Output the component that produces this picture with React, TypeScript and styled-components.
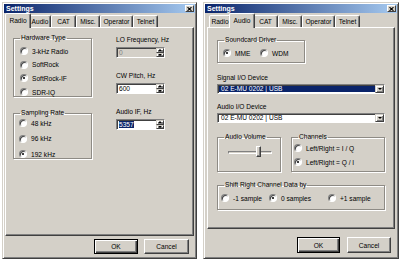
import React from "react";
import styled, { createGlobalStyle, css } from "styled-components";

const FACE = "#d4d0c8";
const SHADOW = "#808080";
const DARK = "#404040";
const NAVY = "#0a246a";

const GlobalStyle = createGlobalStyle`
  * { box-sizing: border-box; }
  html, body { margin: 0; padding: 0; background: #fff; }
  body {
    font-family: "Liberation Sans", Arial, sans-serif;
    font-size: 6.6px;
    color: #000;
  }
`;

const Page = styled.div`
  display: flex;
  align-items: flex-start;
  gap: 6px;
  padding: 2px 0 0 2px;
  width: 400px;
  height: 261px;
  overflow: hidden;
`;

const Window = styled.div<{ $w: number }>`
  width: ${(p) => p.$w}px;
  height: 257px;
  display: flex;
  flex-direction: column;
  background: ${FACE};
  border: 1px solid;
  border-color: ${FACE} ${DARK} ${DARK} ${FACE};
  box-shadow: inset 1px 1px 0 #fff, inset -1px -1px 0 ${SHADOW};
  padding: 1px;
`;

const TitleBar = styled.div`
  height: 9px;
  flex: none;
  display: flex;
  align-items: center;
  justify-content: space-between;
  padding: 0 1px 0 2px;
  background: linear-gradient(to right, ${NAVY}, #a6caf0);
  color: #fff;
  font-weight: bold;
  font-size: 7px;
  line-height: 9px;
`;

const CloseButton = styled.div`
  width: 9px;
  height: 7px;
  display: flex;
  align-items: center;
  justify-content: center;
  background: ${FACE};
  border: 1px solid;
  border-color: #fff ${DARK} ${DARK} #fff;
`;

const Sheet = styled.div<{ $px: number }>`
  display: flex;
  flex-direction: column;
  padding: 0 ${(p) => p.$px}px;
`;

const TabStrip = styled.div`
  height: 14px;
  display: flex;
  align-items: flex-end;
  padding-left: 2px;
  position: relative;
  z-index: 1;
`;

const Tab = styled.div<{ $w: number; $active?: boolean }>`
  width: ${(p) => p.$w}px;
  height: 12px;
  display: flex;
  align-items: center;
  justify-content: center;
  background: ${FACE};
  border: 1px solid;
  border-bottom: none;
  border-color: #fff ${DARK} transparent #fff;
  border-radius: 2px 2px 0 0;
  box-shadow: inset -1px 0 0 ${SHADOW};
  white-space: nowrap;
  ${(p) =>
    p.$active &&
    css`
      width: ${p.$w + 4}px;
      height: 15px;
      margin: 0 -2px -1px;
      padding-bottom: 2px;
      position: relative;
      z-index: 2;
    `}
`;

const Panel = styled.div<{ $h: number }>`
  height: ${(p) => p.$h}px;
  border: 1px solid;
  border-color: #fff ${DARK} ${DARK} #fff;
  box-shadow: inset -1px -1px 0 ${SHADOW};
`;

const Footer = styled.div<{ $top: number; $gap: number }>`
  display: flex;
  justify-content: flex-end;
  gap: ${(p) => p.$gap}px;
  padding: ${(p) => p.$top}px 6px 0 0;
`;

const Button = styled.button<{ $w: number; $h: number; $default?: boolean }>`
  width: ${(p) => p.$w}px;
  height: ${(p) => p.$h}px;
  padding: 0;
  font: inherit;
  color: #000;
  background: ${FACE};
  border: 1px solid;
  border-color: #fff ${DARK} ${DARK} #fff;
  box-shadow: inset -1px -1px 0 ${SHADOW};
  ${(p) =>
    p.$default &&
    css`
      border-color: #000;
      box-shadow: inset 1px 1px 0 #fff, inset -1px -1px 0 ${DARK}, inset -2px -2px 0 ${SHADOW};
    `}
`;

/* ---------- group boxes ---------- */

const Group = styled.fieldset<{ $w?: number; $h: number }>`
  margin: 0;
  padding: 0;
  min-width: 0;
  width: ${(p) => (p.$w ? `${p.$w}px` : "auto")};
  flex: ${(p) => (p.$w ? "none" : "1")};
  height: ${(p) => p.$h}px;
  border: 1px solid #8e8b85;
  box-shadow: 1px 1px 0 #fff, inset 1px 1px 0 #fff;
`;

const Legend = styled.legend<{ $ml?: number }>`
  padding: 0 1px;
  margin-left: ${(p) => p.$ml ?? 6}px;
  height: 8px;
  line-height: 8px;
  white-space: nowrap;
`;

const GroupBody = styled.div<{ $pt: number; $pl: number; $gap: number; $row?: boolean }>`
  display: flex;
  flex-direction: ${(p) => (p.$row ? "row" : "column")};
  gap: ${(p) => p.$gap}px;
  padding: ${(p) => p.$pt}px 0 0 ${(p) => p.$pl}px;
`;

const RadioRow = styled.div<{ $w?: number }>`
  display: flex;
  align-items: center;
  gap: 4px;
  height: 8px;
  white-space: nowrap;
  width: ${(p) => (p.$w ? `${p.$w}px` : "auto")};
  flex: none;
`;

const RadioCircle = styled.span<{ $checked?: boolean }>`
  position: relative;
  width: 8px;
  height: 8px;
  flex: none;
  border-radius: 50%;
  background: #fff;
  border: 1px solid;
  border-color: ${SHADOW} #fff #fff ${SHADOW};
  box-shadow: inset 1px 1px 0 ${DARK};
  ${(p) =>
    p.$checked &&
    css`
      &::after {
        content: "";
        position: absolute;
        left: 2px;
        top: 2px;
        width: 2px;
        height: 2px;
        border-radius: 50%;
        background: #000;
      }
    `}
`;

const Radio = ({ label, checked, w }: { label: string; checked?: boolean; w?: number }) => (
  <RadioRow $w={w}>
    <RadioCircle $checked={checked} />
    <span>{label}</span>
  </RadioRow>
);

/* ---------- radio page ---------- */

const RadioPage = styled.div`
  display: flex;
  gap: 24px;
  padding: 6px 0 0 7px;
`;

const Column = styled.div<{ $w: number; $gap: number; $mt?: number }>`
  width: ${(p) => p.$w}px;
  display: flex;
  flex-direction: column;
  gap: ${(p) => p.$gap}px;
  margin-top: ${(p) => p.$mt ?? 0}px;
`;

const Field = styled.div`
  display: flex;
  flex-direction: column;
  gap: 3px;
`;

const FieldLabel = styled.div<{ $mt?: number }>`
  height: 8px;
  line-height: 8px;
  white-space: nowrap;
  margin-top: ${(p) => p.$mt ?? 0}px;
`;

const Sunken = styled.div<{ $h: number; $bg: string }>`
  height: ${(p) => p.$h}px;
  display: flex;
  border: 1px solid;
  border-color: ${SHADOW} #fff #fff ${SHADOW};
  box-shadow: inset 1px 1px 0 ${DARK};
  background: ${(p) => p.$bg};
`;

const SpinValue = styled.div<{ $disabled?: boolean }>`
  flex: 1;
  padding: 1px 0 0 2px;
  line-height: 8px;
  color: ${(p) => (p.$disabled ? SHADOW : "#000")};
`;

const Highlight = styled.span`
  background: ${NAVY};
  color: #fff;
`;

const SpinButtons = styled.div`
  width: 8px;
  display: flex;
  flex-direction: column;
`;

const RaisedButton = styled.div`
  flex: 1;
  display: flex;
  align-items: center;
  justify-content: center;
  background: ${FACE};
  border: 1px solid;
  border-color: ${FACE} ${DARK} ${DARK} ${FACE};
  box-shadow: inset 1px 1px 0 #fff, inset -1px -1px 0 ${SHADOW};
`;

const Arrow = styled.span<{ $dir: "up" | "down"; $size?: number }>`
  width: 0;
  height: 0;
  border-left: ${(p) => p.$size ?? 2}px solid transparent;
  border-right: ${(p) => p.$size ?? 2}px solid transparent;
  ${(p) =>
    p.$dir === "up"
      ? css`border-bottom: ${p.$size ?? 2}px solid #000;`
      : css`border-top: ${p.$size ?? 2}px solid #000;`}
`;

const SpinBox = ({ value, disabled, selected }: { value: string; disabled?: boolean; selected?: boolean }) => (
  <Sunken $h={11} $bg={disabled ? FACE : "#fff"}>
    <SpinValue $disabled={disabled}>{selected ? <Highlight>{value}</Highlight> : value}</SpinValue>
    <SpinButtons>
      <RaisedButton>
        <Arrow $dir="up" />
      </RaisedButton>
      <RaisedButton>
        <Arrow $dir="down" />
      </RaisedButton>
    </SpinButtons>
  </Sunken>
);

/* ---------- audio page ---------- */

const AudioPage = styled.div`
  display: flex;
  flex-direction: column;
  padding: 8px 9px 0 9px;
`;

const ComboText = styled.div<{ $focused?: boolean }>`
  flex: 1;
  margin: 1px 0 1px 1px;
  padding-left: 2px;
  line-height: 6px;
  white-space: nowrap;
  ${(p) =>
    p.$focused &&
    css`
      background: ${NAVY};
      color: #fff;
    `}
`;

const ComboButton = styled(RaisedButton)`
  flex: none;
  width: 9px;
`;

const Combo = ({ value, focused }: { value: string; focused?: boolean }) => (
  <Sunken $h={10} $bg="#fff">
    <ComboText $focused={focused}>{value}</ComboText>
    <ComboButton>
      <Arrow $dir="down" />
    </ComboButton>
  </Sunken>
);

const GroupRow = styled.div<{ $mt: number }>`
  display: flex;
  gap: 10px;
  margin-top: ${(p) => p.$mt}px;
`;

const Spaced = styled.div<{ $mt: number }>`
  margin-top: ${(p) => p.$mt}px;
  display: flex;
`;

const Slider = styled.div`
  position: relative;
  width: 44px;
  height: 12px;
  margin: 5px 0 0 10px;
`;

const SliderTrack = styled.div`
  position: absolute;
  left: 0;
  right: 0;
  top: 5px;
  height: 3px;
  border-top: 1px solid ${SHADOW};
  border-left: 1px solid ${SHADOW};
  border-bottom: 1px solid #fff;
  border-right: 1px solid #fff;
  background: ${FACE};
`;

const SliderThumb = styled.div`
  position: absolute;
  top: 0;
  width: 5px;
  height: 11px;
  background: ${FACE};
  border: 1px solid;
  border-color: #fff ${DARK} ${DARK} #fff;
  box-shadow: inset -1px -1px 0 ${SHADOW};
`;

const TABS = [
  { label: "Radio", w: 22 },
  { label: "Audio", w: 22 },
  { label: "CAT", w: 25 },
  { label: "Misc.", w: 24 },
  { label: "Operator", w: 33 },
  { label: "Telnet", w: 25 },
];

const CloseGlyph = () => (
  <svg width="5" height="4" viewBox="0 0 5 4">
    <path d="M0.5 0.2 L4.5 3.8 M4.5 0.2 L0.5 3.8" stroke="#000" strokeWidth="1.1" />
  </svg>
);

const Tabs = ({ active }: { active: string }) => (
  <TabStrip>
    {TABS.map((t) => (
      <Tab key={t.label} $w={t.w} $active={t.label === active}>
        {t.label}
      </Tab>
    ))}
  </TabStrip>
);

const Title = () => (
  <TitleBar>
    <span>Settings</span>
    <CloseButton>
      <CloseGlyph />
    </CloseButton>
  </TitleBar>
);

const volume = 0.72;

export default function App() {
  return (
    <>
      <GlobalStyle />
      <Page>
        <Window $w={195}>
          <Title />
          <Sheet $px={1}>
            <Tabs active="Radio" />
            <Panel $h={209}>
              <RadioPage>
                <Column $w={79} $gap={12}>
                  <Group $h={101}>
                    <Legend>Hardware Type</Legend>
                    <GroupBody $pt={5} $pl={6} $gap={5.7}>
                      <Radio label="3-kHz Radio" />
                      <Radio label="SoftRock" />
                      <Radio label="SoftRock-IF" checked />
                      <Radio label="SDR-IQ" />
                    </GroupBody>
                  </Group>
                  <Group $h={55}>
                    <Legend>Sampling Rate</Legend>
                    <GroupBody $pt={2} $pl={5} $gap={7.5}>
                      <Radio label="48 kHz" />
                      <Radio label="96 kHz" />
                      <Radio label="192 kHz" checked />
                    </GroupBody>
                  </Group>
                </Column>
                <Column $w={49} $gap={14} $mt={2}>
                  <Field>
                    <FieldLabel>LO Frequency, Hz</FieldLabel>
                    <SpinBox value="0" disabled />
                  </Field>
                  <Field>
                    <FieldLabel>CW Pitch, Hz</FieldLabel>
                    <SpinBox value="600" />
                  </Field>
                  <Field>
                    <FieldLabel>Audio IF, Hz</FieldLabel>
                    <SpinBox value="5357" selected />
                  </Field>
                </Column>
              </RadioPage>
            </Panel>
          </Sheet>
          <Footer $top={3} $gap={6}>
            <Button $w={44} $h={15} $default>
              OK
            </Button>
            <Button $w={45} $h={15}>
              Cancel
            </Button>
          </Footer>
        </Window>

        <Window $w={196}>
          <Title />
          <Sheet $px={2}>
            <Tabs active="Audio" />
            <Panel $h={202}>
              <AudioPage>
                <Group $w={88} $h={27}>
                  <Legend>Soundcard Driver</Legend>
                  <GroupBody $pt={5} $pl={5} $gap={0} $row>
                    <Radio label="MME" checked w={37} />
                    <Radio label="WDM" />
                  </GroupBody>
                </Group>
                <FieldLabel $mt={11}>Signal I/O Device</FieldLabel>
                <Spaced $mt={2}>
                  <div style={{ flex: 1 }}>
                    <Combo value="02  E-MU 0202 | USB" focused />
                  </div>
                </Spaced>
                <FieldLabel $mt={9}>Audio I/O Device</FieldLabel>
                <Spaced $mt={2}>
                  <div style={{ flex: 1 }}>
                    <Combo value="02  E-MU 0202 | USB" />
                  </div>
                </Spaced>
                <GroupRow $mt={10}>
                  <Group $w={64} $h={39}>
                    <Legend>Audio Volume</Legend>
                    <Slider>
                      <SliderTrack />
                      <SliderThumb style={{ left: `${volume * 39}px` }} />
                    </Slider>
                  </Group>
                  <Group $h={39}>
                    <Legend>Channels</Legend>
                    <GroupBody $pt={3} $pl={2} $gap={6}>
                      <Radio label="Left/Right = I / Q" />
                      <Radio label="Left/Right = Q / I" checked />
                    </GroupBody>
                  </Group>
                </GroupRow>
                <GroupRow $mt={9}>
                  <Group $h={29}>
                    <Legend>Shift Right Channel Data by</Legend>
                    <GroupBody $pt={5} $pl={3} $gap={0} $row>
                      <Radio label="-1 sample" w={48} />
                      <Radio label="0 samples" checked w={59} />
                      <Radio label="+1 sample" />
                    </GroupBody>
                  </Group>
                </GroupRow>
              </AudioPage>
            </Panel>
          </Sheet>
          <Footer $top={8} $gap={7}>
            <Button $w={43} $h={16} $default>
              OK
            </Button>
            <Button $w={44} $h={16}>
              Cancel
            </Button>
          </Footer>
        </Window>
      </Page>
    </>
  );
}
